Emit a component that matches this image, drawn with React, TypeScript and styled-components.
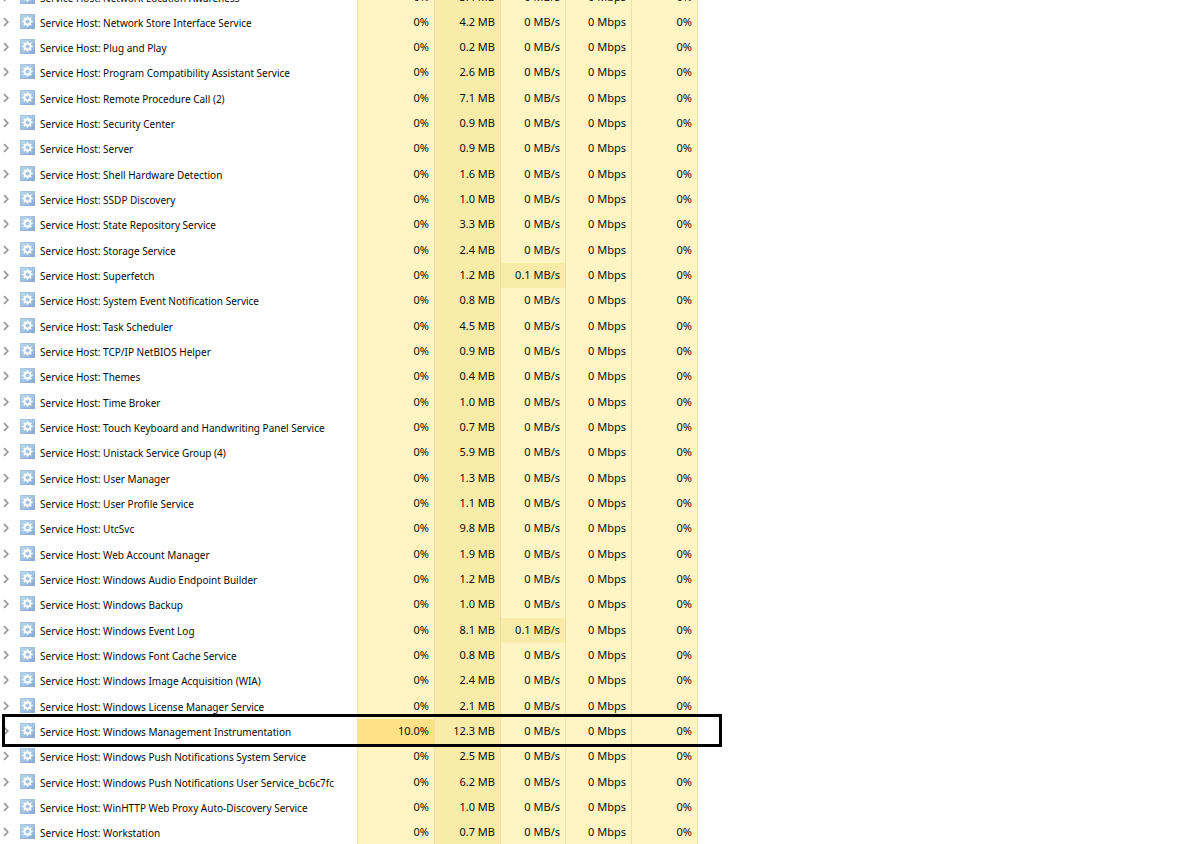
import React from "react";
import styled, { createGlobalStyle } from "styled-components";

const GlobalStyle = createGlobalStyle`
  body {
    margin: 0;
    background: #ffffff;
    color: #0c0c0c;
    font-family: "Noto Sans", "Open Sans", sans-serif;
    font-size: 11px;
  }
`;

type Heat = "low" | "mid" | "high";

const heatColors: Record<Heat, string> = {
  low: "#fff4c4",
  mid: "#f9eca8",
  high: "#ffe187",
};

const Viewport = styled.main`
  height: 100vh;
  overflow: hidden;
`;

const ProcessTable = styled.table`
  margin-top: -15px;
  table-layout: fixed;
  width: 698px;
  border-collapse: separate;
  border-spacing: 0;
`;

const Column = styled.col<{ $width: number }>`
  width: ${(p) => p.$width}px;
`;

const Row = styled.tr<{ $marked: boolean }>`
  position: relative;
  height: 25px;
  vertical-align: top;

  &:nth-child(3n + 4) {
    height: 26px;
  }

  ${(p) =>
    p.$marked &&
    `&::after {
      content: "";
      position: absolute;
      z-index: 1;
      inset: -5px -24px -3px 2px;
      border: 3px solid #000000;
      pointer-events: none;
    }`}
`;

const NameCell = styled.th`
  padding: 0 0 0 2px;
  border-right: 1px solid #efe3ae;
  font-weight: 400;
  text-align: left;
`;

const NameContent = styled.div`
  display: flex;
  align-items: center;
  height: 23px;
  font-size: 10px;
  white-space: nowrap;
`;

const ExpandButton = styled.button`
  display: flex;
  flex: none;
  align-items: center;
  width: 18px;
  height: 16px;
  padding: 0;
  border: 0;
  background: none;
`;

const Gear = styled.svg`
  flex: none;
  width: 15px;
  height: 15px;
`;

const Label = styled.span`
  padding: 2px 0 0 5px;
  line-height: 16px;
`;

const ValueCell = styled.td<{ $heat: Heat }>`
  padding: 0 5px 0 0;
  border-right: 1px solid #ebdfaa;
  background: ${(p) => heatColors[p.$heat]};
  line-height: 23px;
  text-align: right;
  white-space: nowrap;
`;

const Chevron = () => (
  <svg width="8" height="12" viewBox="0 0 8 12" fill="none" aria-hidden="true">
    <path d="M2 2.2l3.8 3.8L2 9.8" stroke="#989898" strokeWidth="1.7" />
  </svg>
);

const teeth = [0, 45, 90, 135, 180, 225, 270, 315];

const ServiceIcon = () => (
  <Gear viewBox="0 0 15 15" aria-hidden="true">
    <defs>
      <linearGradient id="tile" x1="0" y1="0" x2="1" y2="1">
        <stop offset="0" stopColor="#b9dbea" />
        <stop offset="0.5" stopColor="#a3c5e6" />
        <stop offset="1" stopColor="#86a5d6" />
      </linearGradient>
    </defs>
    <rect width="15" height="15" fill="url(#tile)" />
    <rect x="0.5" y="0.5" width="14" height="14" fill="none" stroke="#8fb0d4" strokeOpacity="0.4" />
    <circle cx="7.5" cy="7.5" r="3" fill="none" stroke="#ffffff" strokeWidth="1.8" />
    {teeth.map((angle) => (
      <rect
        key={angle}
        x="6.7"
        y="2.3"
        width="1.6"
        height="1.8"
        fill="#ffffff"
        transform={`rotate(${angle} 7.5 7.5)`}
      />
    ))}
  </Gear>
);

interface Service {
  name: string;
  memory: string;
  cpu?: string;
  disk?: string;
  marked?: boolean;
}

const services: Service[] = [
  { name: "Network Location Awareness", memory: "3.4" },
  { name: "Network Store Interface Service", memory: "4.2" },
  { name: "Plug and Play", memory: "0.2" },
  { name: "Program Compatibility Assistant Service", memory: "2.6" },
  { name: "Remote Procedure Call (2)", memory: "7.1" },
  { name: "Security Center", memory: "0.9" },
  { name: "Server", memory: "0.9" },
  { name: "Shell Hardware Detection", memory: "1.6" },
  { name: "SSDP Discovery", memory: "1.0" },
  { name: "State Repository Service", memory: "3.3" },
  { name: "Storage Service", memory: "2.4" },
  { name: "Superfetch", memory: "1.2", disk: "0.1" },
  { name: "System Event Notification Service", memory: "0.8" },
  { name: "Task Scheduler", memory: "4.5" },
  { name: "TCP/IP NetBIOS Helper", memory: "0.9" },
  { name: "Themes", memory: "0.4" },
  { name: "Time Broker", memory: "1.0" },
  { name: "Touch Keyboard and Handwriting Panel Service", memory: "0.7" },
  { name: "Unistack Service Group (4)", memory: "5.9" },
  { name: "User Manager", memory: "1.3" },
  { name: "User Profile Service", memory: "1.1" },
  { name: "UtcSvc", memory: "9.8" },
  { name: "Web Account Manager", memory: "1.9" },
  { name: "Windows Audio Endpoint Builder", memory: "1.2" },
  { name: "Windows Backup", memory: "1.0" },
  { name: "Windows Event Log", memory: "8.1", disk: "0.1" },
  { name: "Windows Font Cache Service", memory: "0.8" },
  { name: "Windows Image Acquisition (WIA)", memory: "2.4" },
  { name: "Windows License Manager Service", memory: "2.1" },
  { name: "Windows Management Instrumentation", memory: "12.3", cpu: "10.0", marked: true },
  { name: "Windows Push Notifications System Service", memory: "2.5" },
  { name: "Windows Push Notifications User Service_bc6c7fc", memory: "6.2" },
  { name: "WinHTTP Web Proxy Auto-Discovery Service", memory: "1.0" },
  { name: "Workstation", memory: "0.7" },
];

const columnWidths = [358, 77, 66, 65, 66, 66];

const ServiceRow = ({ name, memory, cpu, disk, marked = false }: Service) => (
  <Row $marked={marked}>
    <NameCell scope="row">
      <NameContent>
        <ExpandButton type="button" aria-label={`Expand ${name}`}>
          <Chevron />
        </ExpandButton>
        <ServiceIcon />
        <Label>Service Host: {name}</Label>
      </NameContent>
    </NameCell>
    <ValueCell $heat={cpu ? "high" : "low"}>{cpu ?? "0"}%</ValueCell>
    <ValueCell $heat="mid">{memory} MB</ValueCell>
    <ValueCell $heat={disk ? "mid" : "low"}>{disk ?? "0"} MB/s</ValueCell>
    <ValueCell $heat="low">0 Mbps</ValueCell>
    <ValueCell $heat="low">0%</ValueCell>
  </Row>
);

export default function App() {
  return (
    <>
      <GlobalStyle />
      <Viewport>
        <ProcessTable>
          <colgroup>
            {columnWidths.map((width, index) => (
              <Column key={index} $width={width} />
            ))}
          </colgroup>
          <tbody>
            {services.map((service) => (
              <ServiceRow key={service.name} {...service} />
            ))}
          </tbody>
        </ProcessTable>
      </Viewport>
    </>
  );
}
